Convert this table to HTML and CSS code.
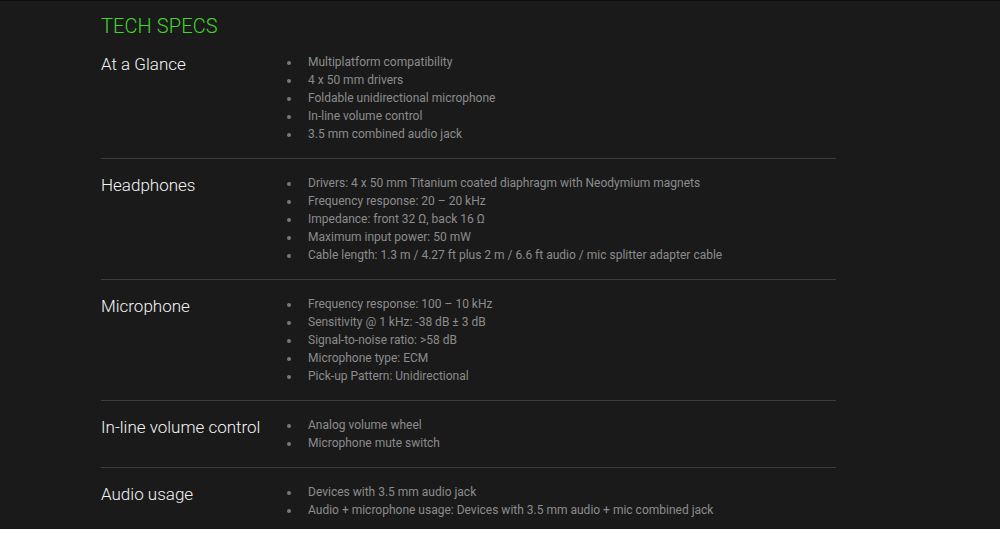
FILE: index.html
```html
<!DOCTYPE html>
<html lang="en">
<head>
    <meta charset="UTF-8">
    <meta name="viewport" content="width=device-width, initial-scale=1.0">
    <title>Tech Specs</title>
    <link rel="stylesheet" href="styles.css">
</head>
<body>
<div class="page">
    <div class="specs">
        <h1>TECH SPECS</h1>

        <div class="spec-row">
            <h2>At a Glance</h2>
            <ul>
                <li>Multiplatform compatibility</li>
                <li>4 x 50 mm drivers</li>
                <li>Foldable unidirectional microphone</li>
                <li>In-line volume control</li>
                <li>3.5 mm combined audio jack</li>
            </ul>
        </div>

        <div class="spec-row">
            <h2>Headphones</h2>
            <ul>
                <li>Drivers: 4 x 50 mm Titanium coated diaphragm with Neodymium magnets</li>
                <li>Frequency response: 20 – 20 kHz</li>
                <li>Impedance: front 32 Ω, back 16 Ω</li>
                <li>Maximum input power: 50 mW</li>
                <li>Cable length: 1.3 m / 4.27 ft plus 2 m / 6.6 ft audio / mic splitter adapter cable</li>
            </ul>
        </div>

        <div class="spec-row">
            <h2>Microphone</h2>
            <ul>
                <li>Frequency response: 100 – 10 kHz</li>
                <li>Sensitivity @ 1 kHz: -38 dB ± 3 dB</li>
                <li>Signal-to-noise ratio: &gt;58 dB</li>
                <li>Microphone type: ECM</li>
                <li>Pick-up Pattern: Unidirectional</li>
            </ul>
        </div>

        <div class="spec-row">
            <h2>In-line volume control</h2>
            <ul>
                <li>Analog volume wheel</li>
                <li>Microphone mute switch</li>
            </ul>
        </div>

        <div class="spec-row">
            <h2>Audio usage</h2>
            <ul>
                <li>Devices with 3.5 mm audio jack</li>
                <li>Audio + microphone usage: Devices with 3.5 mm audio + mic combined jack</li>
            </ul>
        </div>
    </div>
</div>
</body>
</html>
```

FILE: styles.css
```css
body {
    margin: 0;
    background-color: #fff;
    font-family: Roboto, "Liberation Sans", sans-serif;
}
.page {
    background-color: #1a1a1a;
    border-top: 1px solid #0e0e0e;
    padding: 0 0 10px 101px;
}
.specs {
    width: 735px;
}
h1 {
    margin: 0;
    padding-top: 12px;
    height: 37px;
    box-sizing: border-box;
    color: #44d62c;
    font-size: 20px;
    font-weight: 300;
    line-height: 26px;
    letter-spacing: 0.1px;
}
.spec-row {
    display: flex;
    padding: 15px 0;
    border-bottom: 1px solid #3c3c3c;
}
.spec-row:last-child {
    border-bottom: none;
    padding-bottom: 0;
}
h2 {
    width: 186px;
    flex: none;
    margin: 0;
    padding-top: 1px;
    color: #f4f4f4;
    font-size: 17px;
    font-weight: 300;
    line-height: 20px;
}
ul {
    margin: 0;
    padding: 0;
    list-style: none;
}
li {
    position: relative;
    padding-left: 21px;
    color: #8c8c8c;
    font-size: 12px;
    line-height: 18px;
}
li::before {
    content: "";
    position: absolute;
    left: 0;
    top: 8px;
    width: 4px;
    height: 4px;
    border-radius: 50%;
    background-color: #777;
}
```
